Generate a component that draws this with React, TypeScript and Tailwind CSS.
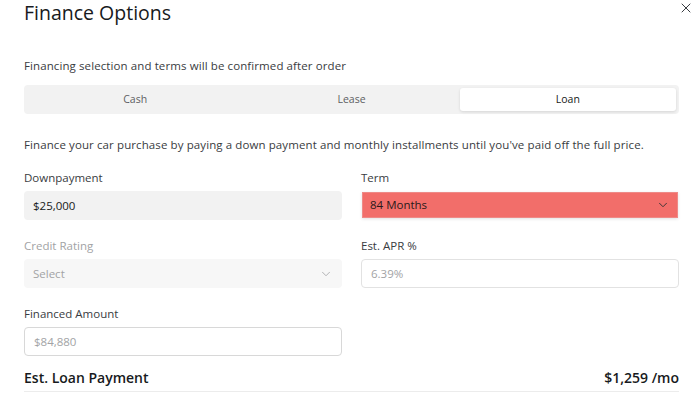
import { X, ChevronDown } from 'lucide-react'

const tabs = ['Cash', 'Lease', 'Loan']

function Label({ children, muted }: { children: React.ReactNode; muted?: boolean }) {
  return (
    <p className={`text-[11.5px] leading-4 ${muted ? 'text-[#a2a3a5]' : 'text-[#393c41]'}`}>{children}</p>
  )
}

export default function App() {
  return (
    <div
      className="w-[700px] h-[394px] overflow-hidden bg-white pl-6 pr-[21px] text-[#393c41]"
      style={{ fontFamily: '"Open Sans", "Liberation Sans", sans-serif' }}
    >
      <div className="flex items-start justify-between">
        <h1 className="text-[19.5px] leading-[26px] font-medium text-[#171a20]">Finance Options</h1>
        <X className="mt-[0px] mr-[-15px] w-[16px] h-[16px] text-[#393c41]" strokeWidth={1.5} />
      </div>

      <p className="mt-8 text-[11.5px] leading-4 tracking-[0.1px]">Financing selection and terms will be confirmed after order</p>

      <div className="mt-[11px] grid grid-cols-3 h-[29px] rounded bg-[#f2f2f2] p-[3px] text-[10.5px]">
        {tabs.map((t) => (
          <div
            key={t}
            className={
              t === 'Loan'
                ? 'flex items-center justify-center rounded-[3px] bg-white text-[#171a20] shadow-[0_1px_3px_rgba(0,0,0,0.12)]'
                : 'flex items-center justify-center text-[#5c5e62]'
            }
          >
            {t}
          </div>
        ))}
      </div>

      <p className="mt-[23px] text-[11.5px] leading-4 tracking-[0.1px]">
        Finance your car purchase by paying a down payment and monthly installments until you've paid off the full price.
      </p>

      <div className="mt-[17px] grid grid-cols-2 gap-x-[19px] gap-y-[18px]">
        <div>
          <Label>Downpayment</Label>
          <div className="mt-[5px] h-[29px] rounded bg-[#f2f2f2] px-[9px] flex items-center text-[11.5px] font-medium text-[#171a20]">
            $25,000
          </div>
        </div>
        <div>
          <Label>Term</Label>
          <div className="mt-[6px] mx-px h-[26px] bg-[#f26e6a] border border-[#ee8a87] shadow-[0_1px_3px_rgba(0,0,0,0.12)] px-[7px] flex items-center justify-between text-[11.5px] font-medium text-[#2a1a1a]">
            84 Months
            <ChevronDown className="w-[14px] h-[14px] text-[#333]" strokeWidth={1.6} />
          </div>
        </div>

        <div>
          <Label muted>Credit Rating</Label>
          <div className="mt-[5px] h-[29px] rounded bg-[#f7f7f7] px-[9px] flex items-center justify-between text-[11.5px] text-[#a2a3a5]">
            Select
            <ChevronDown className="w-[14px] h-[14px] text-[#a2a3a5]" strokeWidth={1.4} />
          </div>
        </div>
        <div>
          <Label>Est. APR %</Label>
          <div className="mt-[5px] h-[29px] rounded border border-[#e2e2e2] px-[9px] flex items-center text-[11.5px] text-[#a2a3a5]">
            6.39%
          </div>
        </div>

        <div>
          <Label>Financed Amount</Label>
          <div className="mt-[5px] h-[29px] rounded border border-[#d8d8d8] px-[9px] flex items-center text-[11.5px] text-[#a2a3a5]">
            $84,880
          </div>
        </div>
        <div />
      </div>

      <div className="mt-[12px] flex items-center justify-between h-[18px] text-[14px] font-semibold text-[#171a20]">
        <span>Est. Loan Payment</span>
        <span>$1,259 /mo</span>
      </div>
      <div className="mt-[5px] h-px bg-[#ececec]" />
    </div>
  )
}
